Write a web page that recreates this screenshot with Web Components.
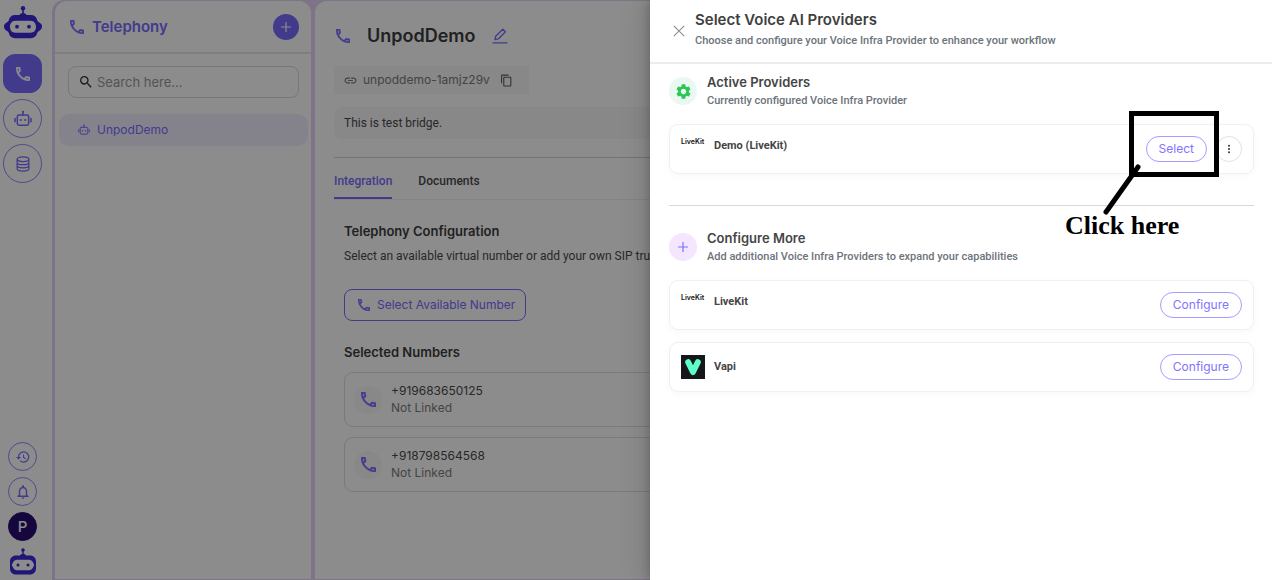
<!DOCTYPE html>
<html lang="en">
<head>
<meta charset="utf-8">
<title>Telephony</title>
<style>
html,body{margin:0;height:100%}
body{font-family:Roboto,"Open Sans",sans-serif;font-size:12px;line-height:16px;color:#4a4a4a;overflow:hidden;
--primary:#796cff;--line:#e8e8ea;--display:Inter,"Open Sans",sans-serif}
</style>
</head>
<body>
<app-shell></app-shell>
<script>
const define=(name,html,init)=>{
  const tpl=document.createElement('template');
  tpl.innerHTML='<style>*{box-sizing:border-box}:host{display:block;box-sizing:border-box}button,input{font:inherit;margin:0}button{cursor:pointer}h1,h2,h3,p{margin:0}h1,h2,h3{font-family:var(--display)}</style>'+html;
  customElements.define(name,class extends HTMLElement{
    constructor(){super();this.attachShadow({mode:'open'}).append(tpl.content.cloneNode(true));}
    connectedCallback(){if(init)init.call(this,this.shadowRoot);}
  });
};

const ICONS={
phone:['3 3 18 18','<path d="M6.54 5c.06.89.21 1.76.45 2.59l-1.2 1.2c-.41-1.2-.67-2.47-.76-3.79h1.51m9.86 12.02c.85.24 1.72.39 2.6.45v1.49c-1.32-.09-2.59-.35-3.8-.75l1.2-1.19M7.5 3H4c-.55 0-1 .45-1 1 0 9.39 7.61 17 17 17 .55 0 1-.45 1-1v-3.49c0-.55-.45-1-1-1-1.24 0-2.45-.2-3.57-.57-.1-.04-.21-.05-.31-.05-.26 0-.51.1-.71.29l-2.2 2.2c-2.83-1.45-5.15-3.76-6.59-6.59l2.2-2.2c.28-.28.36-.67.25-1.02C8.7 6.45 8.5 5.25 8.5 4c0-.55-.45-1-1-1z" stroke="currentColor" stroke-width=".4"/>'],
bot:['0 0 18 18','<g fill="none" stroke="currentColor" stroke-width="1.5" stroke-linecap="round"><rect x="3.3" y="5" width="11.4" height="10.2" rx="1.6"/><path d="M9 5V2M1 8.4v3.4M17 8.4v3.4"/></g><circle cx="9" cy="1.8" r="1.1"/><circle cx="6.8" cy="10" r="1.1"/><circle cx="11.2" cy="10" r="1.1"/>'],
db:['0 0 16 18','<g fill="none" stroke="currentColor" stroke-width="1.4"><ellipse cx="8" cy="3.6" rx="6.6" ry="2.6"/><path d="M1.4 3.6v10.8c0 1.5 3 2.6 6.6 2.6s6.6-1.1 6.6-2.6V3.6M1.4 7.2c0 1.5 3 2.6 6.6 2.6s6.6-1.1 6.6-2.6M1.4 10.8c0 1.5 3 2.6 6.6 2.6s6.6-1.1 6.6-2.6"/></g>'],
history:['1 2 22 20','<path d="M13 3a9 9 0 0 0-9 9H1l3.89 3.89.07.14L9 12H6c0-3.87 3.13-7 7-7s7 3.13 7 7-3.13 7-7 7c-1.93 0-3.68-.79-4.94-2.06l-1.42 1.42A8.954 8.954 0 0 0 13 21a9 9 0 0 0 0-18zm-1 5v5l4.25 2.52.77-1.28-3.52-2.09V8z"/>'],
bell:['3 2 18 20','<path d="M12 22c1.1 0 2-.9 2-2h-4c0 1.1.9 2 2 2zm6-6v-5c0-3.07-1.63-5.64-4.5-6.32V4c0-.83-.67-1.5-1.5-1.5s-1.5.67-1.5 1.5v.68C7.64 5.36 6 7.92 6 11v5l-2 2v1h16v-1l-2-2zm-2 1H8v-6c0-2.48 1.51-4.5 4-4.5s4 2.02 4 4.5v6z"/>'],
search:['3 3 18 18','<path d="M15.5 14h-.79l-.28-.27A6.471 6.471 0 0 0 16 9.5 6.5 6.5 0 1 0 9.5 16c1.61 0 3.09-.59 4.23-1.57l.27.28v.79l5 4.99L20.49 19l-4.99-5zm-6 0C7.01 14 5 11.99 5 9.5S7.01 5 9.5 5 14 7.01 14 9.5 11.99 14 9.5 14z"/>'],
link:['1 3 22 18','<path d="M3.9 12c0-1.71 1.39-3.1 3.1-3.1h4V7H7c-2.76 0-5 2.24-5 5s2.24 5 5 5h4v-1.9H7c-1.71 0-3.1-1.39-3.1-3.1zM8 13h8v-2H8v2zm9-6h-4v1.9h4c1.71 0 3.1 1.39 3.1 3.1s-1.39 3.1-3.1 3.1h-4V17h4c2.76 0 5-2.24 5-5s-2.24-5-5-5z"/>'],
copy:['1 0 22 24','<path d="M16 1H4c-1.1 0-2 .9-2 2v14h2V3h12V1zm3 4H8c-1.1 0-2 .9-2 2v14c0 1.1.9 2 2 2h11c1.1 0 2-.9 2-2V7c0-1.1-.9-2-2-2zm0 16H8V7h11v14z"/>'],
edit:['0 0 16 16','<g fill="none" stroke="currentColor" stroke-width="1.4" stroke-linejoin="round"><path d="M3 11.6l.7-3.3 7.1-7.1 2.6 2.6-7.1 7.1zM.5 14.9h15"/></g>'],
plus:['0 0 12 12','<path d="M5.3 0h1.4v5.3H12v1.4H6.7V12H5.3V6.7H0V5.3h5.3z"/>'],
close:['0 0 12 12','<path d="M.8.8l10.4 10.4M11.2.8L.8 11.2" stroke="currentColor" stroke-width="1.1"/>'],
dots:['0 0 12 12','<circle cx="6" cy="2" r="1.2"/><circle cx="6" cy="6" r="1.2"/><circle cx="6" cy="10" r="1.2"/>'],
gear:['2 2 20 20','<path d="M19.14 12.94c.04-.3.06-.61.06-.94 0-.32-.02-.64-.07-.94l2.03-1.58c.18-.14.23-.41.12-.61l-1.92-3.32c-.12-.22-.37-.29-.59-.22l-2.39.96c-.5-.38-1.03-.7-1.62-.94l-.36-2.54c-.04-.24-.24-.41-.48-.41h-3.84c-.24 0-.43.17-.47.41l-.36 2.54c-.59.24-1.13.57-1.62.94l-2.39-.96c-.22-.08-.47 0-.59.22L2.74 8.87c-.12.21-.08.47.12.61l2.03 1.58c-.05.3-.09.63-.09.94s.02.64.07.94l-2.03 1.58c-.18.14-.23.41-.12.61l1.92 3.32c.12.22.37.29.59.22l2.39-.96c.5.38 1.03.7 1.62.94l.36 2.54c.05.24.24.41.48.41h3.84c.24 0 .44-.17.47-.41l.36-2.54c.59-.24 1.13-.56 1.62-.94l2.39.96c.22.08.47 0 .59-.22l1.92-3.32c.12-.22.07-.47-.12-.61l-2.01-1.58zM12 15.6c-1.98 0-3.6-1.62-3.6-3.6s1.62-3.6 3.6-3.6 3.6 1.62 3.6 3.6-1.62 3.6-3.6 3.6z"/>'],
logo:['0 0 38 33','<circle cx="19" cy="2.3" r="2.2"/><path d="M18.2 3h1.6v5h-1.6zM15.5 9.6c0-2 1.5-2.4 3.5-2.4s3.5.4 3.5 2.4z"/><path fill-rule="evenodd" d="M11 9h16c3.4 0 5.5 2 6.2 5.2.4 1.4 1 1.5 2.2 2.3 2 1.3 2.6 2.3 2.6 4.1s-.6 3-2.6 4.1c-1.2.7-1.7 1-2.2 2.3-.9 3.2-3 5.2-6.2 5.2H11c-3.4 0-5.5-2-6.2-5.2-.4-1.3-1-1.6-2.2-2.3C.6 23.6 0 22.4 0 20.6s.6-2.800 2.600-4.100c1.200-.8 1.800-.9 2.200-2.300C5.500 11 7.600 9 11 9zM11.500 14.700c-3.800 0-5.500 3-5.500 6s1.700 6 5.500 6h15c3.800 0 5.500-3 5.500-6s-1.700-6-5.500-6z"/><circle cx="13" cy="20.7" r="1.9"/><circle cx="25" cy="20.7" r="1.9"/>'],
logosm:['0 0 26 27','<circle cx="13" cy="2" r="1.8"/><path d="M12.3 3h1.4v4h-1.4zM10 8c0-1.400 1.200-2 3-2s3 .6 3 2z"/><path fill-rule="evenodd" d="M6 7.5h14c3.6 0 6 2.4 6 6v7c0 3.6-2.4 6-6 6H6c-3.6 0-6-2.4-6-6v-7c0-3.6 2.4-6 6-6zM6.5 11.8C4.3 11.8 3 14 1.8 17c1.2 3 2.5 5.2 4.7 5.2h13c2.2 0 3.5-2.2 4.7-5.2-1.2-3-2.5-5.2-4.7-5.2z"/><circle cx="8" cy="17" r="1.5"/><circle cx="18" cy="17" r="1.5"/>'],
vapi:['0 0 24 24','<rect width="24" height="24" fill="#15171b"/><path d="M7.2 7.2L12 17l4.8-9.8" fill="none" stroke="#5ffdc9" stroke-width="6" stroke-linecap="round" stroke-linejoin="round"/>']
};
define('ui-icon','<style>:host{display:inline-block;flex:none;width:14px;height:14px}svg{display:block;width:100%;height:100%;fill:currentColor}</style><svg aria-hidden="true"></svg>',function(r){
  const [box,body]=ICONS[this.getAttribute('name')];
  const svg=r.querySelector('svg');
  svg.setAttribute('viewBox',box);
  svg.innerHTML=body;
});

define('nav-rail',`<style>
:host{width:52px;flex:none;background:#fff;display:flex;flex-direction:column;align-items:center;padding:6px 7px 5px 0;color:var(--primary)}
nav,.foot{display:flex;flex-direction:column;align-items:center;gap:6px}
nav{margin-top:15px}.foot{margin-top:auto}
button{display:grid;place-items:center;border:1px solid #9086ff;border-radius:50%;background:none;color:inherit;padding:0;width:39px;height:39px}
button.on{background:var(--primary);border-color:var(--primary);border-radius:12px}
button.on ui-icon{color:#fff;width:14px;height:14px}
.foot button{width:29px;height:29px}
.foot button.me{background:#280b72;border-color:#280b72;color:#fff;font-family:var(--display);font-size:15px;font-weight:500}
.logo{color:#3b28db;width:38px;height:33px}.bot{width:18px;height:18px}.db{width:16px;height:16px}
.logosm{color:#3b28db;width:26px;height:27px;margin-top:1px}
</style>
<ui-icon class="logo" name="logo"></ui-icon>
<nav><button class="on" aria-label="Telephony"><ui-icon name="phone"></ui-icon></button>
<button aria-label="Agents"><ui-icon class="bot" name="bot"></ui-icon></button>
<button aria-label="Knowledge"><ui-icon class="db" name="db"></ui-icon></button></nav>
<div class="foot"><button aria-label="History"><ui-icon name="history"></ui-icon></button>
<button aria-label="Notifications"><ui-icon name="bell"></ui-icon></button>
<button class="me" aria-label="Profile">P</button>
<ui-icon class="logosm" name="logosm"></ui-icon></div>`);

define('side-list',`<style>
:host{width:256px;flex:none;background:#fff;border-radius:12px 12px 0 0}
header{display:flex;align-items:center;gap:8px;height:53px;padding:0 12px 0 15px;border-bottom:2px solid var(--line);color:var(--primary)}
h2{flex:1;font-size:15px;line-height:20px;font-weight:600}
header button{width:26px;height:26px;border:0;border-radius:50%;background:var(--primary);color:#fff;display:grid;place-items:center;padding:0}
header button ui-icon{width:10px;height:10px}
.search{display:flex;align-items:center;gap:5px;height:32px;margin:12px 12px 16px 13px;padding:0 11px;border:1px solid #d9d9d9;border-radius:8px}
.search ui-icon{color:#333;width:12px;height:12px}
input{border:0;outline:0;background:none;padding:0;min-width:0;flex:1;font-family:var(--display);font-size:13px}
input::placeholder{color:#9a9a9a;opacity:1}
a{display:flex;align-items:center;gap:7px;height:32px;margin:0 3px 0 4px;padding:0 19px;border-radius:10px;background:#f1efff;color:var(--primary);text-decoration:none;font-family:var(--display)}
a ui-icon{width:12px;height:12px}
</style>
<header><ui-icon name="phone"></ui-icon><h2>Telephony</h2><button aria-label="Add"><ui-icon name="plus"></ui-icon></button></header>
<div class="search"><ui-icon name="search"></ui-icon><input type="text" aria-label="Search" placeholder="Search here..."></div>
<a href="#"><ui-icon name="bot"></ui-icon><span>UnpodDemo</span></a>`);

define('number-card',`<style>
:host{display:flex;align-items:center;gap:9px;height:55px;padding:0 10px 0 9px;border:1px solid #dedede;border-radius:9px}
.ic{width:28px;height:28px;border-radius:50%;background:#f7f7f9;display:grid;place-items:center;color:var(--primary)}
.ic ui-icon{width:15px;height:15px}
div{line-height:17px;padding-bottom:2px;font-family:var(--display)}small{font-size:12px;color:#7d7d7d;display:block}
</style><span class="ic"><ui-icon name="phone"></ui-icon></span><div><slot></slot><small>Not Linked</small></div>`);

define('bridge-page',`<style>
:host{flex:1;min-width:0;background:#fff;border-radius:12px 12px 0 0;padding:22px 20px 0 19px;white-space:nowrap}
.top{display:flex;align-items:center;height:26px;padding-left:2px;color:var(--primary)}
h1{font-size:18px;line-height:26px;font-weight:600;color:#3c3c3c;margin:0 16px 0 17px}
.edit{width:16px;height:16px}
.slug{display:inline-flex;align-items:center;gap:6px;height:28px;margin-top:17px;padding:0 16px 0 10px;background:#f8f8fa;color:#7a7a7a;font-family:var(--display)}
.slug button{border:0;background:none;padding:0;margin-left:4px;color:#5a5a5a;height:13px}
.slug ui-icon{display:block;width:13px;height:13px}
.note{height:32px;line-height:32px;margin-top:13px;padding:0 10px;background:#f7f7f8;border-radius:8px}
hr{border:0;border-top:1px solid #d2d2d6;margin:18px 0 0}
.tabs{display:flex;gap:26px;height:42px;border-bottom:1px solid #f0f0f0}
.tabs a{color:inherit;text-decoration:none;font-weight:500;line-height:46px;height:41px}
.tabs a.on{color:var(--primary);border-bottom:2px solid var(--primary)}
.body{padding:21px 10px 0}
h3{font-size:13px;line-height:20px;font-weight:600;color:#3c3c3c}
p{margin-top:7px}
.avail{display:flex;align-items:center;gap:7px;height:32px;margin:25px 0 21px;padding:0 10px 0 13px;border:1px solid var(--primary);border-radius:8px;background:none;color:var(--primary);font-family:var(--display)}
.avail ui-icon{width:12px;height:12px}
.list{display:grid;gap:10px;margin-top:10px}
</style>
<div class="top"><ui-icon name="phone"></ui-icon><h1>UnpodDemo</h1><ui-icon class="edit" name="edit"></ui-icon></div>
<div class="slug"><ui-icon name="link"></ui-icon><span>unpoddemo-1amjz29v</span><button aria-label="Copy"><ui-icon name="copy"></ui-icon></button></div>
<div class="note">This is test bridge.</div><hr>
<div class="tabs"><a class="on" href="#">Integration</a><a href="#">Documents</a></div>
<div class="body"><h3>Telephony Configuration</h3><p>Select an available virtual number or add your own SIP trunk</p>
<button class="avail"><ui-icon name="phone"></ui-icon>Select Available Number</button>
<h3>Selected Numbers</h3><div class="list"><number-card>+919683650125</number-card><number-card>+918798564568</number-card></div></div>`);

define('section-head',`<style>
:host{display:flex;align-items:center;gap:10px;height:38px}
.ic{width:28px;height:28px;border-radius:50%;display:grid;place-items:center;background:#e9f9f1;color:#2bc653}
.ic ui-icon{width:15px;height:15px}
:host([tone=add]) .ic{background:#f4e6ff;color:var(--primary)}
:host([tone=add]) .ic ui-icon{width:10px;height:10px}
h3{font-size:13px;line-height:20px;font-weight:600;color:#454545}
p{font-size:11px;line-height:18px;font-weight:500;color:#6c737a}
</style><span class="ic"></span><div><h3></h3><p><slot></slot></p></div>`,function(r){
  r.querySelector('.ic').innerHTML=`<ui-icon name="${this.getAttribute('icon')}"></ui-icon>`;
  r.querySelector('h3').textContent=this.getAttribute('heading');
});

define('provider-card',`<style>
:host{display:flex;align-items:center;gap:9px;height:50px;padding:0 11px;border:1px solid #f0f0f2;border-radius:9px;box-shadow:0 2px 6px rgba(121,108,255,.05);color:#454545}
.mark{width:24px;height:24px;line-height:10px;font-family:var(--display);font-size:7px;font-weight:600;color:#111;flex:none;white-space:nowrap}
.mark ui-icon{width:24px;height:24px}
.name{flex:1;font-size:11px;font-weight:700;line-height:18px}
:host([text-logo]) .name{height:24px}
</style><span class="mark"></span><span class="name"></span><slot></slot>`,function(r){
  const logo=this.getAttribute('text-logo');
  r.querySelector('.mark').innerHTML=logo||'<ui-icon name="vapi"></ui-icon>';
  r.querySelector('.name').textContent=this.getAttribute('name');
});

define('pill-button',`<style>button{height:26px;padding:0 12px;border:1px solid #a79dff;border-radius:13px;background:#fff;color:#8073ff;font-family:var(--display);font-size:12px;font-weight:400;display:block;line-height:16px}
:host([round]) button{width:26px;padding:0;border-color:#e2e2e2;color:#333;display:grid;place-items:center}</style><button><slot></slot></button>`);

define('click-note',`<style>
:host{position:absolute;top:111px;right:53px;width:154px;height:130px;pointer-events:none}
svg{display:block;width:154px;height:130px}
span{position:absolute;left:0;bottom:0;font:bold 26px/30px "Liberation Serif",serif;color:#000;white-space:nowrap}
</style><svg viewBox="0 0 154 130" fill="none" stroke="#000" stroke-width="5"><path d="M66.5 2.5h85v61h-85z"/><path d="M73 56L41 101" stroke-linecap="round"/></svg><span>Click here</span>`);

define('provider-drawer',`<style>
:host{position:absolute;top:0;right:0;bottom:0;width:min(622px,100%);background:#fff;box-shadow:-6px 0 16px rgba(0,0,0,.08),-3px 0 6px rgba(0,0,0,.12),-9px 0 28px rgba(0,0,0,.05)}
header{display:flex;align-items:center;gap:10px;height:64px;padding:0 23px 1px;border-bottom:2px solid #ededee}
.x{border:0;background:none;padding:0;color:#8c8c8c}.x ui-icon{width:12px;height:12px;display:block}
h2{font-size:15px;line-height:20px;font-weight:600;color:#404040}
header p{font-size:11px;line-height:22px;font-weight:500;color:#6c737a}
main{padding:8px 18px 0 19px}
section-head{margin-bottom:14px}
hr{border:0;border-top:1px solid #d9d9dc;margin:31px 0 22px}
provider-card+provider-card{margin-top:12px}
pill-button[round] ui-icon{width:10px;height:10px}
</style>
<header><button class="x" aria-label="Close"><ui-icon name="close"></ui-icon></button><div><h2>Select Voice AI Providers</h2><p>Choose and configure your Voice Infra Provider to enhance your workflow</p></div></header>
<main><section-head icon="gear" heading="Active Providers">Currently configured Voice Infra Provider</section-head>
<provider-card text-logo="LiveKit" name="Demo (LiveKit)"><pill-button>Select</pill-button><pill-button round><ui-icon name="dots"></ui-icon></pill-button></provider-card>
<hr>
<section-head tone="add" icon="plus" heading="Configure More">Add additional Voice Infra Providers to expand your capabilities</section-head>
<provider-card text-logo="LiveKit" name="LiveKit"><pill-button>Configure</pill-button></provider-card>
<provider-card name="Vapi"><pill-button>Configure</pill-button></provider-card></main>
<click-note></click-note>`);

define('app-shell',`<style>
:host{position:relative;height:100vh;overflow:hidden}
.page{display:flex;height:100%;background:#fff}
.work{flex:1;min-width:0;display:flex;gap:4px;padding:1px 0 1px 3px;background:#e4d4f8;border-top-left-radius:12px}
.mask{position:absolute;inset:0;background:rgba(0,0,0,.45)}
</style><div class="page"><nav-rail></nav-rail><div class="work"><side-list></side-list><bridge-page></bridge-page></div></div>
<div class="mask"></div><provider-drawer></provider-drawer>`);
</script>
</body>
</html>
